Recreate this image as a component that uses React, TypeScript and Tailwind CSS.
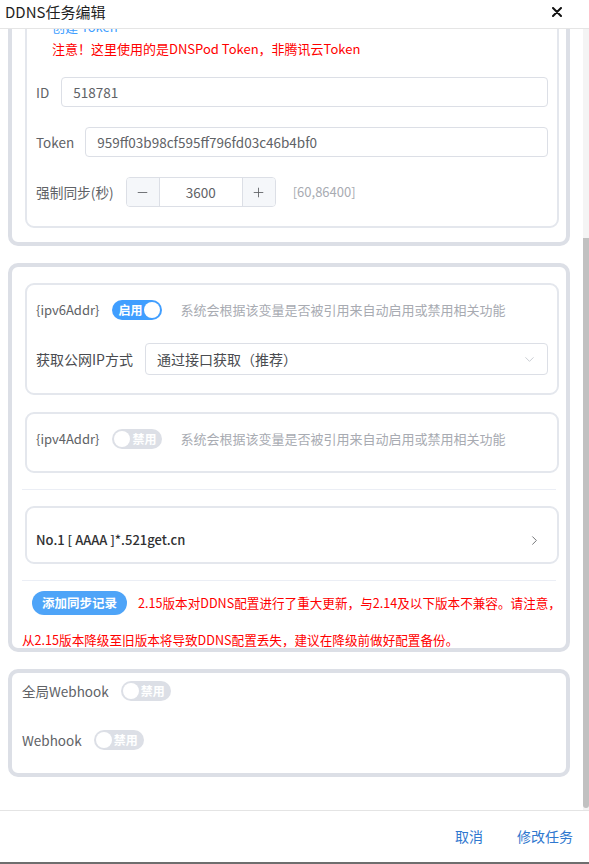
import { ChevronDown, ChevronRight, Minus, Plus } from 'lucide-react'

function Toggle({ on }: { on: boolean }) {
  if (on) {
    return (
      <span className="flex h-[20px] w-[50px] shrink-0 items-center justify-between rounded-full bg-[#409eff] pl-[6px] pr-[2px]">
        <span className="text-[12px] font-bold leading-none text-white">启用</span>
        <span className="h-[16px] w-[16px] rounded-full bg-white" />
      </span>
    )
  }
  return (
    <span className="flex h-[20px] w-[50px] shrink-0 items-center justify-between rounded-full bg-[#dcdfe6] pl-[2px] pr-[6px]">
      <span className="h-[16px] w-[16px] rounded-full bg-white" />
      <span className="text-[12px] font-bold leading-none text-white">禁用</span>
    </span>
  )
}

function TextInput({ value }: { value: string }) {
  return (
    <div className="flex h-[30px] flex-1 items-center rounded-[4px] border border-[#dcdfe6] px-[11px] text-[13.5px] text-[#606266]">
      {value}
    </div>
  )
}

const outerCard = 'ml-[8px] mr-[13px] rounded-[10px] border-4 border-[#dcdfe6] px-[10px]'
const innerCard = 'ml-[3px] mr-[-3px] rounded-[9px] border-2 border-[#e4e7ed] px-[9px]'

export default function App() {
  return (
    <div className="flex h-[864px] w-[589px] flex-col overflow-hidden bg-white font-['Noto_Sans_CJK_SC',sans-serif] text-[13px] text-[#606266]">
      {/* header */}
      <div className="flex h-[29px] shrink-0 items-start justify-between border-b border-[#e5e5e5] pl-[5px] pr-[27px] pt-[2px]">
        <span className="text-[15px] leading-[19px] text-[#1f1f1f]">DDNS任务编辑</span>
        <svg width="10" height="10" viewBox="0 0 10 10" className="mt-[4.5px]">
          <path d="M1 1L9 9M9 1L1 9" stroke="#111" strokeWidth="2" strokeLinecap="round" />
        </svg>
      </div>

      {/* body */}
      <div className="flex min-h-0 flex-1">
        <div className="min-w-0 flex-1 overflow-hidden">
          {/* provider card */}
          <div className={`${outerCard} mt-[-60px] pb-[14px] pt-[13px]`}>
            <div className={`${innerCard} pb-[19px] pt-[29px]`}>
              <div className="ml-[16px] leading-[20px] text-[#409eff]">创建 Token</div>
              <div className="ml-[16px] mt-[2px] leading-[20px] text-[#f00]">
                注意！这里使用的是DNSPod Token，非腾讯云Token
              </div>
              <div className="mt-[18px] flex h-[30px] items-center">
                <span className="mr-[12px] text-[13.5px]">ID</span>
                <TextInput value="518781" />
              </div>
              <div className="mt-[20px] flex h-[30px] items-center">
                <span className="mr-[11px] text-[13.5px]">Token</span>
                <TextInput value="959ff03b98cf595ff796fd03c46b4bf0" />
              </div>
              <div className="mt-[20px] flex h-[30px] items-center">
                <span className="mr-[12px] text-[13.7px]">强制同步(秒)</span>
                <div className="flex h-[30px] w-[150px] shrink-0 overflow-hidden rounded-[4px] border border-[#dcdfe6]">
                  <span className="flex w-[33px] items-center justify-center border-r border-[#dcdfe6] bg-[#f5f7fa]">
                    <Minus size={15} strokeWidth={1.4} className="text-[#606266]" />
                  </span>
                  <span className="flex flex-1 items-center justify-center text-[13.5px] text-[#606266]">3600</span>
                  <span className="flex w-[33px] items-center justify-center border-l border-[#dcdfe6] bg-[#f5f7fa]">
                    <Plus size={15} strokeWidth={1.4} className="text-[#606266]" />
                  </span>
                </div>
                <span className="ml-[17px] text-[#a8abb2]">[60,86400]</span>
              </div>
            </div>
          </div>

          {/* ip card */}
          <div className={`${outerCard} mt-[17px] pt-[16px]`}>
            <div className={`${innerCard} pb-[18px] pt-[10px]`}>
              <div className="flex h-[30px] items-center">
                <span className="mr-[13px]">{'{ipv6Addr}'}</span>
                <Toggle on />
                <span className="ml-[18px] text-[#a8abb2]">系统会根据该变量是否被引用来自动启用或禁用相关功能</span>
              </div>
              <div className="mt-[18px] flex h-[32px] items-center">
                <span className="mr-[12px] text-[14px] text-[#4a4c50]">获取公网IP方式</span>
                <div className="flex h-[32px] flex-1 items-center justify-between rounded-[4px] border border-[#dcdfe6] pl-[11px] pr-[10px]">
                  <span className="text-[14px] text-[#4a4c50]">通过接口获取（推荐）</span>
                  <ChevronDown size={15} strokeWidth={1.2} className="text-[#b8bcc4]" />
                </div>
              </div>
            </div>

            <div className={`${innerCard} mt-[17px] pb-[17px] pt-[10px]`}>
              <div className="flex h-[30px] items-center">
                <span className="mr-[13px]">{'{ipv4Addr}'}</span>
                <Toggle on={false} />
                <span className="ml-[18px] text-[#a8abb2]">系统会根据该变量是否被引用来自动启用或禁用相关功能</span>
              </div>
            </div>

            <div className="mt-[16px] h-px bg-[#ebeef5]" />

            <div className={`${innerCard} mt-[16px] pb-[12px] pt-[22px]`}>
              <div className="flex h-[20px] items-center justify-between">
                <span className="font-medium text-[#303133]">No.1 [ AAAA ]*.521get.cn</span>
                <ChevronRight size={15} strokeWidth={1.4} className="mr-[6px] text-[#606266]" />
              </div>
            </div>

            <div className="mt-[16px] h-px bg-[#ebeef5]" />

            <div className="mt-[10px] flex h-[24px] items-center whitespace-nowrap">
              <button
                type="button"
                className="ml-[10px] h-[24px] w-[95px] shrink-0 rounded-full bg-[#4ea4f8] text-[12.5px] font-semibold text-white"
              >
                添加同步记录
              </button>
              <span className="ml-[11px] text-[12.6px] text-[#f00]">
                2.15版本对DDNS配置进行了重大更新，与2.14及以下版本不兼容。请注意，
              </span>
            </div>
            <div className="mt-[17px] whitespace-nowrap text-[12.6px] leading-[16px] text-[#f00]">
              从2.15版本降级至旧版本将导致DDNS配置丢失，建议在降级前做好配置备份。
            </div>
          </div>

          {/* webhook card */}
          <div className={`${outerCard} mt-[17px] pb-[18px] pt-[3px]`}>
            <div className="flex h-[30px] items-center">
              <span className="mr-[12px] text-[13.5px]">全局Webhook</span>
              <Toggle on={false} />
            </div>
            <div className="mt-[19px] flex h-[30px] items-center">
              <span className="mr-[12px] text-[13.5px]">Webhook</span>
              <Toggle on={false} />
            </div>
          </div>
        </div>

        {/* scrollbar */}
        <div className="w-[6px] shrink-0 bg-[#f4f4f4]">
          <div className="mt-[209px] h-[570px] rounded-b-[3px] bg-[#c1c1c1]" />
        </div>
      </div>

      {/* footer */}
      <div className="flex h-[54px] shrink-0 items-center justify-end gap-[34px] border-b-2 border-t border-b-[#6e6e6e] border-t-[#e4e4e4] pr-[16px]">
        <button type="button" className="text-[14px] text-[#2f78cf]">
          取消
        </button>
        <button type="button" className="text-[14px] text-[#2f78cf]">
          修改任务
        </button>
      </div>
    </div>
  )
}
